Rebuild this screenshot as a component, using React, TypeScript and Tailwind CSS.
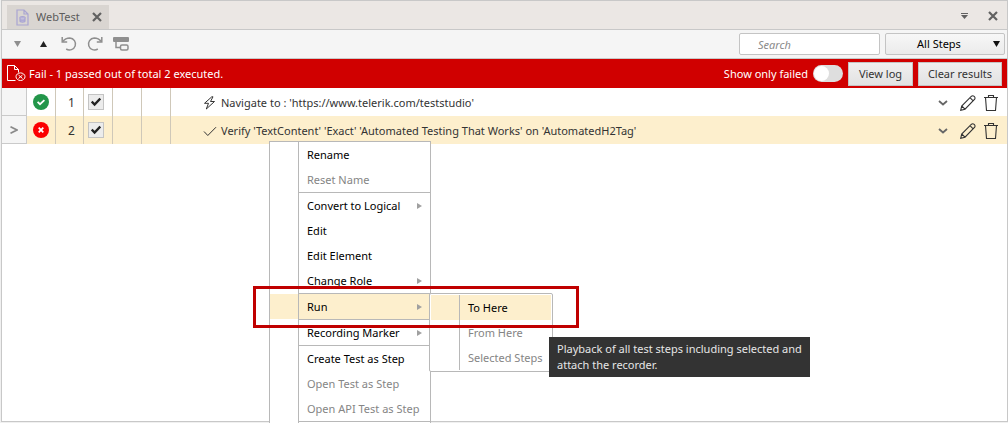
import React, { useState } from "react";
import clsx from "clsx";

const steps = [
  { id: 1, passed: true, kind: "navigate", text: "Navigate to : 'https://www.telerik.com/teststudio'" },
  { id: 2, passed: false, kind: "verify", text: "Verify 'TextContent' 'Exact' 'Automated Testing That Works' on 'AutomatedH2Tag'" },
];

type Item = { label: string; disabled?: boolean; submenu?: boolean; active?: boolean };

const menuGroups: Item[][] = [
  [{ label: "Rename" }, { label: "Reset Name", disabled: true }],
  [
    { label: "Convert to Logical", submenu: true },
    { label: "Edit" },
    { label: "Edit Element" },
    { label: "Change Role", submenu: true },
  ],
  [{ label: "Run", submenu: true, active: true }],
  [{ label: "Recording Marker", submenu: true }],
  [
    { label: "Create Test as Step" },
    { label: "Open Test as Step", disabled: true },
    { label: "Open API Test as Step", disabled: true },
  ],
];

const runItems: Item[] = [
  { label: "To Here", active: true },
  { label: "From Here", disabled: true },
  { label: "Selected Steps", disabled: true },
];

const CloseIcon = () => (
  <svg width="10" height="10" viewBox="0 0 10 10" fill="none" stroke="#616161" strokeWidth="2.2">
    <path d="M1 1l8 8M9 1L1 9" />
  </svg>
);

const UndoIcon = ({ flip }: { flip?: boolean }) => (
  <svg
    width="16"
    height="16"
    viewBox="0 0 16 16"
    fill="none"
    stroke="#8f8f8f"
    strokeWidth="1.5"
    className={clsx(flip && "-scale-x-100")}
  >
    <path d="M1.200 1v5h5" />
    <path d="M1.500 5.700C3.500 3.200 6 2 8.800 2a6 6 0 1 1-3.600 11" />
  </svg>
);

const DocIcon = () => (
  <svg width="13" height="17" viewBox="0 0 13 17" fill="none" stroke="#a9a5d2" strokeWidth="1.2">
    <path d="M1 1h7l4 4v11H1zM8 1v4h4" />
    <ellipse cx="6.500" cy="8.500" rx="2.500" ry="1" fill="#a9a5d2" />
    <path d="M4 8.500v3.500c0 1.400 5 1.400 5 0V8.500M4 10.500c.5 1 4.500 1 5 0" fill="#c3bfdc" />
  </svg>
);

const FailIcon = () => (
  <svg width="19" height="17" viewBox="0 0 19 17" fill="none" stroke="#fff" strokeWidth="1">
    <path d="M8.500 15.500h-8V.5h7l4 4v3M7.500.5v4h4" />
    <ellipse cx="13.500" cy="11.700" rx="4.500" ry="3.800" />
    <path d="M11.500 10l4 3.500M15.500 10l-4 3.500" />
  </svg>
);

const StatusIcon = ({ passed }: { passed: boolean }) => (
  <svg width="16" height="16" viewBox="0 0 16 16" fill="none" stroke="#fff" strokeWidth="1.800">
    <circle cx="8" cy="8" r="8" fill={passed ? "#23964a" : "#fb0000"} stroke="none" />
    <path d={passed ? "M4.600 7.800l2.400 2.400 4.400-4" : "M5.700 5.700l4.600 4.600M10.300 5.700l-4.600 4.600"} />
  </svg>
);

const KindIcon = ({ kind }: { kind: string }) => (
  <svg width="14" height="14" viewBox="0 0 14 14" fill="none" stroke="#333" strokeWidth="1">
    {kind === "navigate" ? (
      <path d="M8.800.8L1.500 7.300h4L3.300 13 11.500 5.500h-4L10 .8z" />
    ) : (
      <path d="M1 7.500l3.800 4L13 3.200" />
    )}
  </svg>
);

const PencilIcon = () => (
  <svg width="16" height="16" viewBox="0 0 16 16" fill="none" stroke="#333" strokeWidth="1.100">
    <path d="M.7 15.300l1-4.300L11.500 1.200c1.800-1.300 4.300 1 3.200 3L5 14.200zM10 2.700l3.400 3.400M1.700 11l3.300 3.200" />
  </svg>
);

const TrashIcon = () => (
  <svg width="14" height="16" viewBox="0 0 14 16" fill="none" stroke="#333" strokeWidth="1.100">
    <path d="M0 2.500h14M4.500 2.500v-2h5v2M1.500 2.500l1 13h9l1-13" />
  </svg>
);

const MenuItem = ({ item }: { item: Item }) => (
  <button
    disabled={item.disabled}
    className={clsx(
      "flex h-[25px] w-full items-stretch text-left",
      item.disabled ? "text-[#858585]" : "text-black",
      item.active && "bg-[#fdefcd]"
    )}
  >
    <span className="w-[29px] shrink-0 border-r border-[#b8b8b8]" />
    <span className="flex flex-1 items-center pr-2 pl-2 whitespace-nowrap">
      {item.label}
      {item.submenu && (
        <svg width="5" height="6" viewBox="0 0 5 6" className="ml-auto" fill="#a0a0a0">
          <path d="M0 0l5 3-5 3z" />
        </svg>
      )}
    </span>
  </button>
);

const StepRow = ({ step, selected }: { step: (typeof steps)[number]; selected: boolean }) => {
  const [checked, setChecked] = useState(true);
  return (
    <div className={clsx("flex h-7 items-stretch text-[#333]", selected ? "bg-[#fdefcd]" : "bg-white")}>
      <div className="flex w-[25px] items-center justify-center border-r border-b border-[#cacaca] bg-[#f5f5f5]">
        {selected && (
          <svg width="8" height="8" viewBox="0 0 8 8" fill="none" stroke="#8a8a8a" strokeWidth="1.700">
            <path d="M.5.7L7 4 .5 7.300" />
          </svg>
        )}
      </div>
      <div className="flex w-[29px] items-center justify-center border-r border-[#cfc8b9]">
        <StatusIcon passed={step.passed} />
      </div>
      <div className="flex w-7 items-center justify-center border-r border-[#cfc8b9] pt-0.5 pl-1 text-[12px]">
        {step.id}
      </div>
      <label className="relative flex w-[29px] items-center border-r border-[#cfc8b9] pl-1">
        <input
          type="checkbox"
          checked={checked}
          onChange={() => setChecked(!checked)}
          aria-label={`Enable step ${step.id}`}
          className="size-4 appearance-none border border-[#c4c4c4] bg-[#ececec]"
        />
        {checked && (
          <svg
            width="10"
            height="10"
            viewBox="0 0 10 10"
            fill="none"
            stroke="#222"
            strokeWidth="2.400"
            className="pointer-events-none absolute left-[7px]"
          >
            <path d="M.7 4.500l2.900 3L9.300 1.600" />
          </svg>
        )}
      </label>
      <div className="w-[29px] border-r border-[#cfc8b9]" />
      <div className="w-[29px] border-r border-[#cfc8b9]" />
      <div className="flex flex-1 items-center gap-1 pt-0.5 pl-8">
        <KindIcon kind={step.kind} />
        <span className="whitespace-nowrap">{step.text}</span>
      </div>
      <div className="flex items-center gap-3 pt-0.5 pr-[9px]">
        <button aria-label="Expand step">
          <svg width="10" height="6" viewBox="0 0 10 6" fill="none" stroke="#666" strokeWidth="1.800">
            <path d="M1 1l4 3.500L9 1" />
          </svg>
        </button>
        <button aria-label="Edit step">
          <PencilIcon />
        </button>
        <button aria-label="Delete step" className="-ml-1">
          <TrashIcon />
        </button>
      </div>
    </div>
  );
};

export default function App() {
  const [onlyFailed, setOnlyFailed] = useState(false);

  return (
    <div className="relative flex h-screen min-h-[423px] flex-col overflow-hidden bg-[#f0f0f0] pl-px font-['Noto_Sans',sans-serif] text-[11px] leading-4">
      <div className="flex flex-1 flex-col border border-[#c8c8c8] bg-white">
        {/* Tabs */}
        <div className="flex h-[29px] items-end border-b border-[#c8c8c8] bg-[#ebe7e4] pl-[5px]">
          <div className="flex h-6 items-center bg-[#d9d5d1] pr-[7px] pl-[9px] text-[#5c5c5c]">
            <DocIcon />
            <span className="mr-3 ml-[7px]">WebTest</span>
            <button aria-label="Close tab">
              <CloseIcon />
            </button>
          </div>
          <div className="mb-2 ml-auto flex items-center gap-5 pr-[9px]">
            <button aria-label="Open documents">
              <svg width="7" height="6" viewBox="0 0 7 6" fill="#616161">
                <path d="M0 0h7v1H0zM0 2h7L3.500 6z" />
              </svg>
            </button>
            <button aria-label="Close panel">
              <CloseIcon />
            </button>
          </div>
        </div>

        {/* Toolbar */}
        <div className="flex h-[29px] items-center border-b border-[#c8c8c8] bg-[#f5f5f5] pr-0.5 pl-3">
          <button aria-label="Move down">
            <svg width="7" height="6" viewBox="0 0 7 6" fill="#8f8f8f">
              <path d="M0 0h7L3.500 6z" />
            </svg>
          </button>
          <button aria-label="Move up" className="ml-[19px]">
            <svg width="7" height="6" viewBox="0 0 7 6" fill="#222">
              <path d="M0 6h7L3.500 0z" />
            </svg>
          </button>
          <button aria-label="Undo" className="ml-3.5">
            <UndoIcon />
          </button>
          <button aria-label="Redo" className="ml-2.5">
            <UndoIcon flip />
          </button>
          <button aria-label="Group steps" className="ml-2.5">
            <svg width="16" height="14" viewBox="0 0 16 14" fill="none" stroke="#8f8f8f" strokeWidth="1.500">
              <rect x="0" y="0" width="16" height="5" rx="1" fill="#8f8f8f" stroke="none" />
              <path d="M3 5v5.500h4" />
              <rect x="7.500" y="8" width="7.500" height="5" rx="1.500" />
            </svg>
          </button>
          <input
            type="text"
            placeholder="Search"
            aria-label="Search"
            className="ml-auto h-[22px] w-[141px] rounded-xs border border-[#c4c4c4] bg-white pl-[18px] italic placeholder:text-[#8a8a8a]"
          />
          <div className="relative ml-[5px] flex items-center">
            <select
              aria-label="Step filter"
              className="h-[22px] w-[120px] appearance-none rounded-xs border border-[#c4c4c4] bg-linear-to-b from-[#f7f7f7] to-[#ebebeb] pr-3 text-center text-black"
            >
              <option>All Steps</option>
            </select>
            <svg width="7" height="6" viewBox="0 0 7 6" className="pointer-events-none absolute right-[5px]" fill="#111">
              <path d="M0 0h7L3.500 6z" />
            </svg>
          </div>
        </div>

        {/* Result bar */}
        <div className="flex h-[29px] items-center bg-[#d00000] pr-[5px] pl-[5px] text-white">
          <FailIcon />
          <span className="ml-[3px] whitespace-nowrap">Fail - 1 passed out of total 2 executed.</span>
          <label className="mr-[5px] ml-auto flex items-center gap-[5px]">
            Show only failed
            <span className="relative flex">
              <input
                type="checkbox"
                checked={onlyFailed}
                onChange={() => setOnlyFailed(!onlyFailed)}
                className="peer h-[17px] w-[30px] appearance-none rounded-full bg-[#dedede]"
              />
              <span className="pointer-events-none absolute top-px left-px size-[15px] rounded-full bg-white peer-checked:left-[14px]" />
            </span>
          </label>
          <button className="h-6 w-[65px] border border-[#c4c4c4] bg-linear-to-b from-[#f0f0f0] to-[#e2e2e2] text-[#333]">
            View log
          </button>
          <button className="ml-[5px] h-6 w-[84px] border border-[#c4c4c4] bg-linear-to-b from-[#f0f0f0] to-[#e2e2e2] text-[#333]">
            Clear results
          </button>
        </div>

        {/* Steps */}
        {steps.map((step) => (
          <StepRow key={step.id} step={step} selected={step.id === 2} />
        ))}
      </div>
      <div className="h-px" />

      {/* Context menu */}
      <div className="absolute top-[141px] left-[269px] w-[162px] border border-b-0 border-[#b8b8b8] bg-white">
        {menuGroups.map((group, i) => (
          <div key={i}>
            {group.map((item) => (
              <MenuItem key={item.label} item={item} />
            ))}
            <div className="ml-7 h-px bg-[#b8b8b8]" />
          </div>
        ))}
        <div className="h-6 w-[29px] border-r border-[#b8b8b8]" />
      </div>

      {/* Run submenu */}
      <div className="absolute top-[293px] left-[429px] w-[124px] rounded-xs border border-[#b8b8b8] bg-white p-px">
        {runItems.map((item) => (
          <MenuItem key={item.label} item={item} />
        ))}
      </div>

      {/* Highlight around the Run command */}
      <div className="pointer-events-none absolute top-[286px] left-[253px] h-[42px] w-[326px] border-3 border-[#c00000]" />

      <div
        role="tooltip"
        className="absolute top-[337px] left-[549px] w-[261px] bg-[#333] py-1 pl-2 text-[#e6e6e6]"
      >
        Playback of all test steps including selected and attach the recorder.
      </div>
    </div>
  );
}
